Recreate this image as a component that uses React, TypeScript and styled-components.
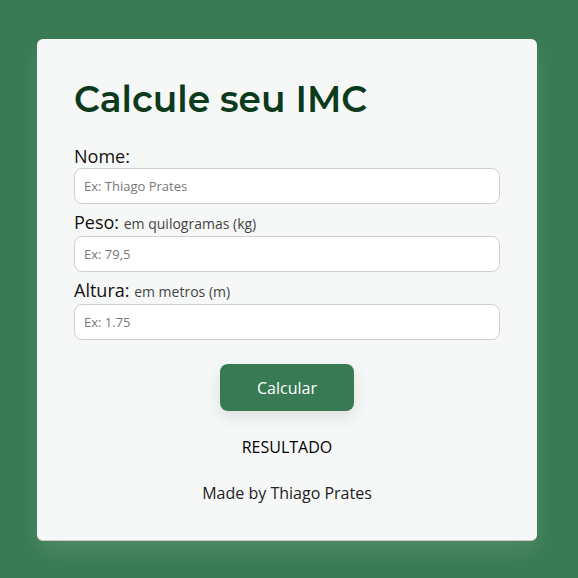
import React from "react";
import styled, { createGlobalStyle } from "styled-components";

const Global = createGlobalStyle`
  html, body { margin: 0; padding: 0; }
  body {
    background: #387a53;
    font-family: "Open Sans", "Liberation Sans", sans-serif;
    width: 578px;
    height: 578px;
    overflow: hidden;
  }
`;

const Page = styled.div`
  width: 578px;
  height: 578px;
  display: flex;
  align-items: flex-start;
  justify-content: flex-start;
  padding: 39px 0 0 37px;
  box-sizing: border-box;
`;

const Card = styled.div`
  width: 500px;
  height: 502px;
  box-sizing: border-box;
  background: #f6f8f7;
  border-radius: 6px;
  border-bottom: 1px solid #c8cbc9;
  box-shadow: 0 10px 22px rgba(255, 255, 255, 0.12);
  padding: 35px 37px 0 37px;
  display: flex;
  flex-direction: column;
`;

const Title = styled.h1`
  margin: 0 0 20px 0;
  font-family: "Montserrat", "Lato", "Inter", sans-serif;
  font-weight: 600;
  font-size: 36px;
  line-height: 50px;
  color: #0b3a1d;
`;

const Field = styled.div`
  display: flex;
  flex-direction: column;
  margin-bottom: 6px;
`;

const Label = styled.label`
  font-size: 18px;
  line-height: 24px;
  color: #111;
`;

const Hint = styled.span`
  font-size: 14px;
  color: #444;
`;

const Input = styled.input`
  width: 426px;
  height: 36px;
  box-sizing: border-box;
  border: 1px solid #cfcfcf;
  border-radius: 8px;
  background: #fff;
  padding: 0 9px;
  font-family: "Open Sans", "Liberation Sans", sans-serif;
  font-size: 13px;
  outline: none;
  &::placeholder { color: #777; }
`;

const Button = styled.button`
  align-self: center;
  margin-top: 18px;
  width: 134px;
  height: 47px;
  border: none;
  border-radius: 8px;
  background: #387a53;
  color: #fff;
  font-family: "Open Sans", "Liberation Sans", sans-serif;
  font-size: 16px;
  box-shadow: 0 6px 16px rgba(0, 0, 0, 0.1);
`;

const Result = styled.p`
  margin: 24px 0 0 0;
  text-align: center;
  font-size: 16px;
  line-height: 24px;
  color: #000;
`;

const Footer = styled.p`
  margin: 22px 0 0 0;
  text-align: center;
  font-size: 16px;
  line-height: 24px;
  color: #222;
`;

export default function App() {
  return (
    <>
      <Global />
      <Page>
        <Card>
          <Title>Calcule seu IMC</Title>
          <Field>
            <Label>Nome:</Label>
            <Input placeholder="Ex: Thiago Prates" />
          </Field>
          <Field>
            <Label>
              Peso: <Hint>em quilogramas (kg)</Hint>
            </Label>
            <Input placeholder="Ex: 79,5" />
          </Field>
          <Field>
            <Label>
              Altura: <Hint>em metros (m)</Hint>
            </Label>
            <Input placeholder="Ex: 1.75" />
          </Field>
          <Button>Calcular</Button>
          <Result>RESULTADO</Result>
          <Footer>Made by Thiago Prates</Footer>
        </Card>
      </Page>
    </>
  );
}
